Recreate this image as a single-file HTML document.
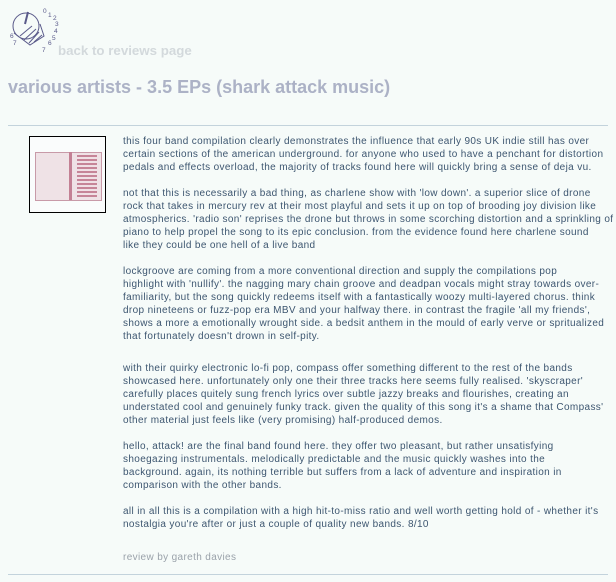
<!DOCTYPE html>
<html><head><meta charset="utf-8"><style>
html,body{margin:0;padding:0;width:616px;height:582px;background:#f6fbf9;overflow:hidden;position:relative}
body{font-family:"Liberation Sans",sans-serif}
.p{position:absolute;left:123px;font-size:10px;line-height:13px;color:#3d5670;white-space:nowrap;letter-spacing:0.36px}
.hr{position:absolute;left:8px;width:600px;height:1px;background:#c3d3dc}
</style></head><body>
<svg style="position:absolute;left:6px;top:4px" width="54" height="50" viewBox="0 0 54 50">
<g fill="none" stroke="#5a5a8a" stroke-width="1">
<circle cx="20" cy="22" r="13"/>
<path d="M8 29 L24 41 L38 32 L34 20"/>
<path d="M14 32 L26 22 M18 36 L30 25 M23 39 L33 28 M28 38 L36 31"/>
<path d="M19 20 L22 8" stroke-width="2"/>
</g>
<g fill="#5a5a8a" font-size="6.5" font-family="Liberation Sans">
<text x="37" y="9">0</text><text x="42" y="13">1</text><text x="47" y="16">2</text><text x="49" y="22">3</text><text x="48" y="29">4</text><text x="46" y="36">5</text><text x="42" y="41">6</text><text x="36" y="48">7</text><text x="4" y="34">6</text><text x="7" y="41">7</text>
</g></svg>
<div style="position:absolute;left:58px;top:43px;font-size:13.3px;font-weight:bold;color:#d3d9dc">back to reviews page</div>
<div style="position:absolute;left:8px;top:77px;font-size:18px;font-weight:bold;color:#acb2c6">various artists - 3.5 EPs (shark attack music)</div>
<div class="hr" style="top:125px"></div>
<div style="position:absolute;left:29px;top:136px;width:75px;height:75px;border:1px solid #000;background:#fafcfc">
<div style="position:absolute;left:5px;top:15px;width:65px;height:47px;background:#efe2e6;border:1px solid #c89aa8"></div>
<div style="position:absolute;left:39px;top:15px;width:3px;height:48px;background:#c38094"></div>
<div style="position:absolute;left:47px;top:18px;width:20px;height:42px;background:repeating-linear-gradient(#c68598 0 2px,#f0e0e5 2px 4px)"></div>
</div>
<div class="p" style="top:135px">this four band compilation clearly demonstrates the influence that early 90s UK indie still has over<br>certain sections of the american underground. for anyone who used to have a penchant for distortion<br>pedals and effects overload, the majority of tracks found here will quickly bring a sense of deja vu.</div>
<div class="p" style="top:187px">not that this is necessarily a bad thing, as charlene show with 'low down'. a superior slice of drone<br>rock that takes in mercury rev at their most playful and sets it up on top of brooding joy division like<br>atmospherics. 'radio son' reprises the drone but throws in some scorching distortion and a sprinkling of<br>piano to help propel the song to its epic conclusion. from the evidence found here charlene sound<br>like they could be one hell of a live band</div>
<div class="p" style="top:265px">lockgroove are coming from a more conventional direction and supply the compilations pop<br>highlight with 'nullify'. the nagging mary chain groove and deadpan vocals might stray towards over-<br>familiarity, but the song quickly redeems itself with a fantastically woozy multi-layered chorus. think<br>drop nineteens or fuzz-pop era MBV and your halfway there. in contrast the fragile 'all my friends',<br>shows a more a emotionally wrought side. a bedsit anthem in the mould of early verve or spritualized<br>that fortunately doesn't drown in self-pity.</div>
<div class="p" style="top:362px">with their quirky electronic lo-fi pop, compass offer something different to the rest of the bands<br>showcased here. unfortunately only one their three tracks here seems fully realised. 'skyscraper'<br>carefully places quitely sung french lyrics over subtle jazzy breaks and flourishes, creating an<br>understated cool and genuinely funky track. given the quality of this song it's a shame that Compass'<br>other material just feels like (very promising) half-produced demos.</div>
<div class="p" style="top:440px">hello, attack! are the final band found here. they offer two pleasant, but rather unsatisfying<br>shoegazing instrumentals. melodically predictable and the music quickly washes into the<br>background. again, its nothing terrible but suffers from a lack of adventure and inspiration in<br>comparison with the other bands.</div>
<div class="p" style="top:505px">all in all this is a compilation with a high hit-to-miss ratio and well worth getting hold of - whether it's<br>nostalgia you're after or just a couple of quality new bands. 8/10</div>
<div class="p" style="top:551px;color:#9aa2aa">review by gareth davies</div>
<div class="hr" style="top:574px"></div>
</body></html>
